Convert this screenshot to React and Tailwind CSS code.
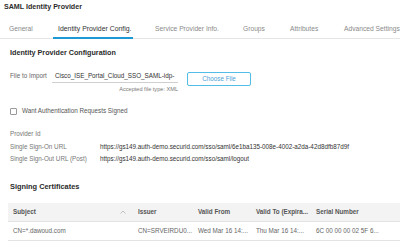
import React from 'react';

const tabs = [
    { label: 'General', w: 'w-[49px]' },
    { label: 'Identity Provider Config.', w: 'w-[97px]', active: true },
    { label: 'Service Provider Info.', w: 'w-[88px]' },
    { label: 'Groups', w: 'w-[47px]' },
    { label: 'Attributes', w: 'w-[54px]' },
    { label: 'Advanced Settings', w: 'w-[56px]' },
];

const urls = [
    { label: 'Provider Id', value: '' },
    { label: 'Single Sign-On URL', value: 'https://gs149.auth-demo.securid.com/sso/saml/6e1ba135-008e-4002-a2da-42d8dfb87d9f' },
    { label: 'Single Sign-Out URL (Post)', value: 'https://gs149.auth-demo.securid.com/sso/saml/logout' },
];

const cols = 'grid grid-cols-[125px_60px_58px_60px_89px]';

const App = () => {
    return (
        <div className="w-[400px] h-[243px] overflow-hidden bg-white text-[#333] font-['Liberation_Sans',Arial,sans-serif]">
            <div className="pl-[4px] pt-[2px] text-[7.1px] leading-[10px] font-bold text-[#2b2b2b]">SAML Identity Provider</div>

            {/* tabs */}
            <div className="flex h-[27px] border-b border-[#e6e6e6] pl-[9px] whitespace-nowrap">
                {tabs.map((t) => (
                    <div key={t.label} className={`${t.w} shrink-0 flex items-end`}>
                        {t.active ? (
                            <span className="-ml-[5px] pl-[5px] pr-[1px] pb-[3px] border-b-2 border-[#1d9ad6] text-[6.9px] leading-[10px] text-[#333] mb-[-1px]">{t.label}</span>
                        ) : (
                            <span className="pb-[4px] text-[6.7px] leading-[10px] text-[#8a8a8a]">{t.label}</span>
                        )}
                    </div>
                ))}
            </div>

            <div className="pl-[10px]">
                <div className="mt-[9px] text-[7.2px] leading-[10px] font-bold text-[#2b2b2b]">Identity Provider Configuration</div>

                {/* file import */}
                <div className="mt-[13px] flex items-start">
                    <div className="w-[42px] shrink-0 text-[6.3px] leading-[10px] text-[#666]">File to Import</div>
                    <div className="w-[126px] shrink-0">
                        <div className="border-b border-[#cfcfcf] pl-[3px] pb-[1px] whitespace-nowrap text-[6.3px] leading-[10px] text-[#333]">
                            Cisco_ISE_Portal_Cloud_SSO_SAML-idp-
                        </div>
                        <div className="mt-[2px] text-right text-[5.6px] leading-[8px] text-[#777]">Accepted file type: XML</div>
                    </div>
                    <div className="ml-[9px] mt-[1px] w-[64px] h-[14px] rounded-[2px] border-[1.5px] border-[#52bde6] flex items-center justify-center text-[6.3px] leading-[8px] text-[#4a9fd8] bg-white">
                        Choose File
                    </div>
                </div>

                {/* checkbox */}
                <div className="mt-[13px] flex items-center h-[10px]">
                    <div className="w-[7px] h-[7px] rounded-[1px] border border-[#9a9a9a] bg-white" />
                    <span className="ml-[5px] text-[6.3px] leading-[10px] text-[#555]">Want Authentication Requests Signed</span>
                </div>

                {/* urls */}
                <div className="mt-[11.75px]">
                    {urls.map((u) => (
                        <div key={u.label} className="flex h-[12.5px] items-center whitespace-nowrap text-[6.3px]">
                            <div className="w-[90px] shrink-0 text-[#777]">{u.label}</div>
                            <div className="text-[#333]">{u.value}</div>
                        </div>
                    ))}
                </div>

                <div className="mt-[16.75px] text-[7.4px] leading-[10px] font-bold text-[#2b2b2b]">Signing Certificates</div>

                {/* table */}
                <div className="mt-[11px] -ml-[2px] whitespace-nowrap text-[6.3px]">
                    <div className={`${cols} h-[19px] items-center bg-[#f3f3f3] border-b border-[#e3e3e3] font-bold text-[#555]`}>
                        <div className="pl-[5px] flex items-center justify-between pr-[7px]">
                            <span>Subject</span>
                            <svg width="6" height="4" viewBox="0 0 6 4" fill="none">
                                <path d="M0.5 3.5 L3 1 L5.5 3.5" stroke="#b5b5b5" strokeWidth="0.8" />
                            </svg>
                        </div>
                        <div className="pl-[5px]">Issuer</div>
                        <div className="pl-[5px]">Valid From</div>
                        <div className="pl-[5px]">Valid To (Expira...</div>
                        <div className="pl-[5px]">Serial Number</div>
                    </div>
                    <div className={`${cols} h-[19px] items-center border-b border-[#e3e3e3] text-[#666]`}>
                        <div className="pl-[5px]">CN=*.dawoud.com</div>
                        <div className="pl-[5px]">CN=SRVEIRDU0...</div>
                        <div className="pl-[5px]">Wed Mar 16 14:...</div>
                        <div className="pl-[5px]">Thu Mar 16 14:...</div>
                        <div className="pl-[5px]">6C 00 00 00 02 5F 6...</div>
                    </div>
                </div>
            </div>
        </div>
    );
};

export default App;
